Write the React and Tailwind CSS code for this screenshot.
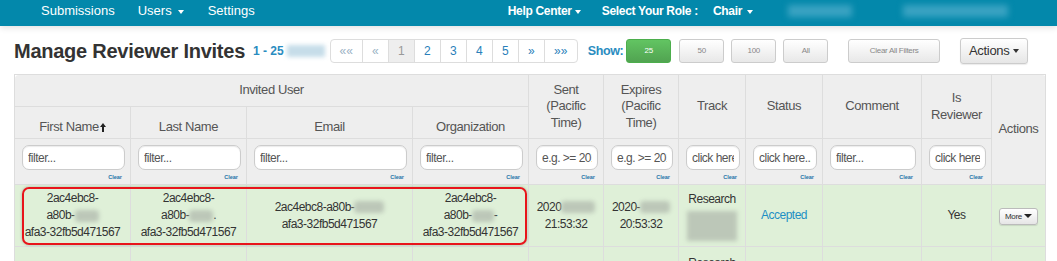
import React from "react";

function Caret({ className = "border-t-white" }) {
  return <span className={`inline-block w-0 h-0 border-x-[3.5px] border-x-transparent border-t-[4px] ${className}`} />;
}

function Blur({ w, h = "h-[12px]", c = "bg-[#bcc7b8]" }) {
  return <span className={`inline-block align-middle ${w} ${h} ${c} blur-[2px] rounded-sm`} />;
}

function Filter({ placeholder }) {
  return (
    <td className="border border-[#ddd] bg-[#eee] pl-[7px] pr-[5px] pt-[6px] pb-0 align-top">
      <input
        readOnly
        placeholder={placeholder}
        className="block h-[25px] w-full rounded-[7px] border border-[#ccc] bg-white px-[5px] text-[12px] tracking-[-0.5px] text-[#555] placeholder:text-[#555] shadow-[inset_0_1px_1px_rgba(0,0,0,0.08)] outline-none"
      />
      <div className="text-right pr-[3px] mt-[3px] text-[5.5px] leading-[8px] font-bold text-[#1f74a8]">Clear</div>
    </td>
  );
}

function Th({ children, className = "", ...rest }) {
  return (
    <th
      {...rest}
      className={`border border-[#ddd] bg-[#eee] font-normal text-center text-[#555] text-[13px] tracking-[-0.4px] leading-[16.5px] px-[4px] ${className}`}
    >
      {children}
    </th>
  );
}

function Td({ children, className = "", color = "text-[#333]" }) {
  return (
    <td className={`border border-[#ddd] bg-[#dff0d8] text-center ${color} text-[12px] tracking-[-0.5px] leading-[17px] px-[4px] align-middle ${className}`}>
      {children}
    </td>
  );
}

function SmallBtn({ children, className = "" }) {
  return (
    <button className={`h-[24px] rounded-[3px] border text-[8px] tracking-[-0.3px] ${className}`}>{children}</button>
  );
}

export default function App() {
  return (
    <div className="h-[261px] w-[1057px] overflow-hidden bg-white font-['Liberation_Sans',Arial,sans-serif]">
      {/* top nav */}
      <div className="h-[26px] bg-[#0388ab] text-white text-[13px] flex items-start pl-[41px] shadow-[0_2px_6px_rgba(0,0,0,0.12)] relative">
        <div className="flex items-center leading-[20px]">
          <span>Submissions</span>
          <span className="ml-[23px]">Users</span>
          <span className="ml-[6px] mb-[1px]"><Caret /></span>
          <span className="ml-[24px]">Settings</span>
        </div>
        <div className="ml-[253px] flex items-center leading-[20px] text-[12px] font-bold tracking-[-0.3px]">
          <span>Help Center</span>
          <span className="ml-[3px] mb-[1px]"><Caret /></span>
          <span className="ml-[21px]">Select Your Role :</span>
          <span className="ml-[15px]">Chair</span>
          <span className="ml-[5px] mb-[1px]"><Caret /></span>
          <span className="ml-[35px] inline-block w-[64px] h-[12px] bg-[#3aa3c2] blur-[3px]" />
          <span className="ml-[51px] inline-block w-[105px] h-[12px] bg-[#3aa3c2] blur-[3px]" />
        </div>
      </div>

      {/* title bar */}
      <div className="mt-[12px] h-[26px] flex items-center pl-[14px]">
        <h1 className="text-[20px] leading-[24px] font-bold tracking-[-0.25px] text-[#333]">Manage Reviewer Invites</h1>
        <span className="ml-[8px] text-[12px] font-bold text-[#2a8cc0]">1 - 25</span>
        <span className="ml-[3px] inline-block w-[38px] h-[12px] bg-[#c6dde9] blur-[2px]" />
        <div className="ml-[5px] flex h-[24px] rounded-[4px] border border-[#ddd] text-[12px] overflow-hidden">
          <span className="w-[32px] flex items-center justify-center text-[#9ab2c4] border-r border-[#ddd]">««</span>
          <span className="w-[26px] flex items-center justify-center text-[#9ab2c4] border-r border-[#ddd]">«</span>
          <span className="w-[26px] flex items-center justify-center text-[#999] bg-[#eee] border-r border-[#ddd]">1</span>
          {["2", "3", "4", "5"].map(n => (
            <span key={n} className="w-[26px] flex items-center justify-center text-[#2a7fba] border-r border-[#ddd]">{n}</span>
          ))}
          <span className="w-[26px] flex items-center justify-center text-[#2a7fba] border-r border-[#ddd]">»</span>
          <span className="w-[32px] flex items-center justify-center text-[#2a7fba]">»»</span>
        </div>
        <span className="ml-[10px] text-[12.5px] font-bold tracking-[-0.4px] text-[#2a8cc0]">Show:</span>
        <SmallBtn className="ml-[3px] w-[45px] border-[#4cae4c] bg-gradient-to-b from-[#62c462] to-[#51a351] text-white">25</SmallBtn>
        <SmallBtn className="ml-[8px] w-[45px] border-[#ccc] bg-gradient-to-b from-white to-[#e8e8e8] text-[#888]">50</SmallBtn>
        <SmallBtn className="ml-[7px] w-[45px] border-[#ccc] bg-gradient-to-b from-white to-[#e8e8e8] text-[#888]">100</SmallBtn>
        <SmallBtn className="ml-[7px] w-[45px] border-[#ccc] bg-gradient-to-b from-white to-[#e8e8e8] text-[#888]">All</SmallBtn>
        <SmallBtn className="ml-[20px] w-[92px] border-[#ccc] bg-gradient-to-b from-white to-[#e8e8e8] text-[#888]">Clear All Filters</SmallBtn>
        <button className="ml-[20px] h-[26px] w-[68px] rounded-[3px] border border-[#ccc] bg-gradient-to-b from-white to-[#e6e6e6] text-[13px] tracking-[-0.3px] text-[#333] flex items-center justify-center gap-[4px] shadow-[0_1px_1px_rgba(0,0,0,0.08)]">
          Actions <Caret className="border-t-[#333]" />
        </button>
      </div>

      {/* table */}
      <div className="relative ml-[14px] mt-[10px] w-[1031px]">
        <table className="w-[1031px] table-fixed border-collapse">
          <colgroup>
            <col className="w-[116px]" />
            <col className="w-[116px]" />
            <col className="w-[166px]" />
            <col className="w-[116px]" />
            <col className="w-[75px]" />
            <col className="w-[75px]" />
            <col className="w-[67px]" />
            <col className="w-[77px]" />
            <col className="w-[99px]" />
            <col className="w-[70px]" />
            <col className="w-[54px]" />
          </colgroup>
          <thead>
            <tr className="h-[32px]">
              <Th colSpan={4} className="rounded-tl-[4px]">Invited User</Th>
              <Th rowSpan={2}>Sent<br />(Pacific<br />Time)</Th>
              <Th rowSpan={2}>Expires<br />(Pacific<br />Time)</Th>
              <Th rowSpan={2}>Track</Th>
              <Th rowSpan={2}>Status</Th>
              <Th rowSpan={2}>Comment</Th>
              <Th rowSpan={2}>Is<br />Reviewer</Th>
              <Th rowSpan={3} className="rounded-tr-[4px]">Actions</Th>
            </tr>
            <tr className="h-[32px]">
              <Th className="align-bottom pb-[3px]">
                First Name
                <svg viewBox="0 0 6 9" className="inline-block ml-[1px] w-[6px] h-[9px] align-[-1px]">
                  <path d="M3 0 L6 4 H4 V9 H2 V4 H0 Z" fill="#222" />
                </svg>
              </Th>
              <Th className="align-bottom pb-[3px]">Last Name</Th>
              <Th className="align-bottom pb-[3px]">Email</Th>
              <Th className="align-bottom pb-[3px]">Organization</Th>
            </tr>
            <tr className="h-[46px]">
              <Filter placeholder="filter..." />
              <Filter placeholder="filter..." />
              <Filter placeholder="filter..." />
              <Filter placeholder="filter..." />
              <Filter placeholder="e.g. >= 2015" />
              <Filter placeholder="e.g. >= 2015" />
              <Filter placeholder="click here..." />
              <Filter placeholder="click here..." />
              <Filter placeholder="filter..." />
              <Filter placeholder="click here..." />
            </tr>
          </thead>
          <tbody>
            <tr className="h-[62px]">
              <Td>
                2ac4ebc8-
                <br />
                a80b-<Blur w="w-[24px]" />
                <br />
                afa3-32fb5d471567
              </Td>
              <Td>
                2ac4ebc8-
                <br />
                a80b-<Blur w="w-[24px]" />.
                <br />
                afa3-32fb5d471567
              </Td>
              <Td>
                2ac4ebc8-a80b-<Blur w="w-[30px]" />
                <br />
                afa3-32fb5d471567
              </Td>
              <Td>
                2ac4ebc8-
                <br />
                a80b-<Blur w="w-[22px]" />-
                <br />
                afa3-32fb5d471567
              </Td>
              <Td>
                2020<Blur w="w-[34px]" />
                <br />
                21:53:32
              </Td>
              <Td>
                2020-<Blur w="w-[30px]" />
                <br />
                20:53:32
              </Td>
              <Td>
                Research
                <div className="mx-auto mt-[3px] w-[50px] h-[30px] bg-[#bcc7b8] blur-[2px]" />
              </Td>
              <Td color="text-[#1d8fc4]">Accepted</Td>
              <Td />
              <Td>Yes</Td>
              <Td>
                <button className="inline-flex items-center gap-[2px] h-[17px] w-[39px] justify-center rounded-[3px] border border-[#bbb] bg-gradient-to-b from-white to-[#e6e6e6] text-[8px] tracking-[-0.3px] text-[#333] shadow-[0_1px_1px_rgba(0,0,0,0.1)]">
                  More <Caret className="border-t-[#222] border-x-[4px] border-t-[4px]" />
                </button>
              </Td>
            </tr>
            {/* next row, only its top edge is in view */}
            <tr className="h-[40px]">
              <Td /><Td /><Td /><Td /><Td /><Td />
              <Td className="align-top pt-[8px]">Research</Td>
              <Td /><Td /><Td /><Td />
            </tr>
          </tbody>
        </table>
        {/* highlight annotation */}
        <div className="absolute left-[8px] top-[113px] w-[505px] h-[58px] rounded-[7px] border-2 border-[#e8141b] shadow-[0_0_3px_rgba(0,0,0,0.25)] pointer-events-none" />
      </div>
    </div>
  );
}
